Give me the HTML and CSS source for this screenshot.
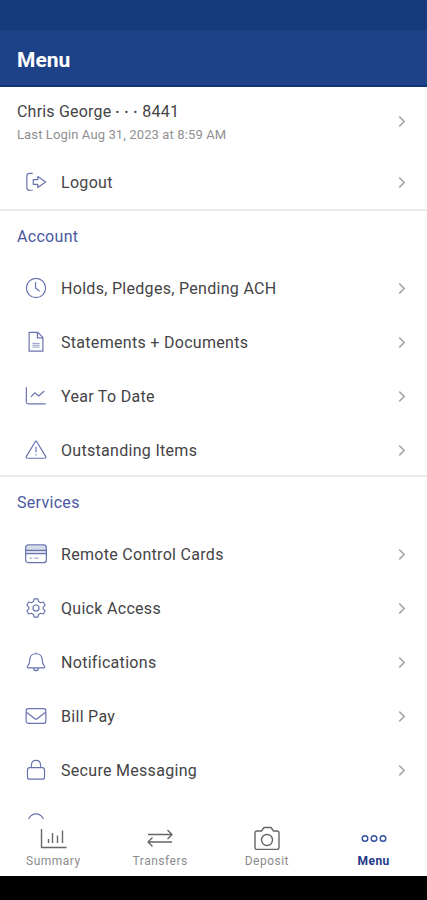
FILE: index.html
```
<!doctype html>
<html lang="en">
<head>
<meta charset="utf-8">
<meta name="viewport" content="width=device-width, initial-scale=1">
<title>Menu</title>
<link rel="stylesheet" href="styles.css">
</head>

<body>
<svg class="defs" width="0" height="0">
    <symbol id="chevron" viewBox="0 0 8 12"><path d="M1.500 1.500L6 6l-4.500 4.500"/></symbol>
</svg>
<div class="phone">
    <div class="status"></div>
    <header class="header"><h1 class="title">Menu</h1></header>
    <main class="content">
        <a class="profile">
            <div class="profile-text">
                <div class="name">Chris George <span class="dots">•••</span>8441</div>
                <div class="login">Last Login Aug 31, 2023 at 8:59 AM</div>
            </div>
            <svg class="chevron"><use href="#chevron"/></svg>
        </a>
        <a class="row logout">
            <svg class="icon" viewBox="0 0 24 24"><path d="M8.500 2.500H5q-3 0-3 3v12.500q0 3 3 3h3.500M9 9.500h5V6l8.500 6-8.500 6v-3.500H9z"/></svg>
            <span class="label">Logout</span>
            <svg class="chevron"><use href="#chevron"/></svg>
        </a>

        <section class="section">
            <h2 class="section-title">Account</h2>
            <a class="row">
                <svg class="icon" viewBox="0 0 24 24"><circle cx="12" cy="12" r="10.500"/><path d="M11.500 5.500V12l4.500 3.500"/></svg>
                <span class="label">Holds, Pledges, Pending ACH</span>
                <svg class="chevron"><use href="#chevron"/></svg>
            </a>
            <a class="row">
                <svg class="icon" viewBox="0 0 24 24"><path d="M4.500 1.500H14l5.500 5.500v15h-15zM13.500 1.500v6h6"/><path class="fine" d="M8 13.500h8M8 15.500h8M8 17.500h8"/></svg>
                <span class="label">Statements + Documents</span>
                <svg class="chevron"><use href="#chevron"/></svg>
            </a>
            <a class="row">
                <svg class="icon" viewBox="0 0 24 24"><path d="M1.500 2.500v16q0 2 2 2h19M6.500 13l4-4.500 4.500 3.500 6-5.500"/></svg>
                <span class="label">Year To Date</span>
                <svg class="chevron"><use href="#chevron"/></svg>
            </a>
            <a class="row">
                <svg class="icon" viewBox="0 0 24 24"><path d="M11 3.200q1-1.700 2 0l9.500 15.800q.8 1.800-1 2h-19q-1.800-.2-1-2zM12 8.500v6M12 16.500v1.500"/></svg>
                <span class="label">Outstanding Items</span>
                <svg class="chevron"><use href="#chevron"/></svg>
            </a>
        </section>

        <section class="section">
            <h2 class="section-title">Services</h2>
            <a class="row">
                <svg class="icon" viewBox="0 0 24 24"><rect class="shade" x="1" y="3" width="22" height="8.500"/><rect x=".7" y="2" width="22.600" height="19.500" rx="3"/><path d="M1 8h22M1 11.500h22"/><path class="fine" d="M5 16.500h3M10 16.500h5"/></svg>
                <span class="label">Remote Control Cards</span>
                <svg class="chevron"><use href="#chevron"/></svg>
            </a>
            <a class="row">
                <svg class="icon" viewBox="0 0 24 24"><circle cx="12" cy="12" r="3.300"/><path d="M10 2h4l.7 3 2.300 1.300 3-.9 2 3.400L19.800 11v2l2.200 2.200-2 3.400-3-.9-2.300 1.300-.7 3h-4l-.7-3L7 17.700l-3 .9-2-3.400L4.200 13v-2L2 8.800l2-3.400 3 .9L9.300 5z"/></svg>
                <span class="label">Quick Access</span>
                <svg class="chevron"><use href="#chevron"/></svg>
            </a>
            <a class="row">
                <svg class="icon" viewBox="0 0 24 24"><path d="M12 1.500v1.500M3.500 18.500q-2-.5-.3-2.500 2-2 2-6.500Q5.500 3 12 3t6.800 6.500q0 4.500 2 6.500 1.700 2-.3 2.500zM9.500 18.500q0 3 2.500 3t2.500-3"/></svg>
                <span class="label">Notifications</span>
                <svg class="chevron"><use href="#chevron"/></svg>
            </a>
            <a class="row">
                <svg class="icon" viewBox="0 0 24 24"><rect x="1.200" y="4" width="21.600" height="16" rx="2.500"/><path d="M1.700 8l9 7q1.300 1 2.600 0l9-7"/></svg>
                <span class="label">Bill Pay</span>
                <svg class="chevron"><use href="#chevron"/></svg>
            </a>
            <a class="row">
                <svg class="icon" viewBox="0 0 24 24"><rect x="2.700" y="9.500" width="18.600" height="12.500" rx="2.500"/><path d="M7 9.500V7q0-5.500 5-5.500T17 7v2.500"/></svg>
                <span class="label">Secure Messaging</span>
                <svg class="chevron"><use href="#chevron"/></svg>
            </a>
            <a class="row">
                <svg class="icon" viewBox="0 0 24 24"><circle cx="12" cy="9.500" r="8.500"/></svg>
            </a>
        </section>
    </main>

    <nav class="tabs">
        <a class="tab">
            <svg class="tab-icon" viewBox="0 0 28 24"><path d="M2.500 3v18.500h25M9.500 13v4M13.500 7v10M18.500 9.500V17M23.500 4.500V17"/></svg>
            <span>Summary</span>
        </a>
        <a class="tab">
            <svg class="tab-icon" viewBox="0 0 28 24"><path d="M2 8.500h24M21.500 4L26 8.500 21.500 13M26 16H2M6.500 11.500L2 16l4.500 4.500"/></svg>
            <span>Transfers</span>
        </a>
        <a class="tab">
            <svg class="tab-icon" viewBox="0 0 28 24"><path d="M4 5h4.500L11 1.500h7L20.500 5H24q2 0 2 2v14.500q0 2-2 2H4q-2 0-2-2V7q0-2 2-2z"/><circle cx="14" cy="14" r="5.500"/></svg>
            <span>Deposit</span>
        </a>
        <a class="tab active">
            <svg class="tab-icon" viewBox="0 0 28 24"><circle cx="5" cy="12.500" r="2.800"/><circle cx="14" cy="12.500" r="2.800"/><circle cx="23" cy="12.500" r="2.800"/></svg>
            <span>Menu</span>
        </a>
    </nav>
    <div class="system-bar"></div>
</div>
</body>
</html>
```

FILE: styles.css
```
* { box-sizing: border-box; }
body { margin: 0; font-family: Roboto, "Liberation Sans", sans-serif; color: #444446; background: #fff; }
.defs { display: block; height: 0; }
.phone { display: flex; flex-direction: column; height: 900px; overflow: hidden; }

.status { flex: none; height: 30px; background: #153a7e; }
.header { flex: none; display: flex; align-items: center; height: 57px; padding: 4px 17px 0; background: #1e4288; border-bottom: 2px solid #12347a; }
.title { margin: 0; font-size: 21px; font-weight: 700; line-height: 28px; color: #fff; }

.content { flex: 1; min-height: 0; overflow: hidden; }
.profile { display: flex; align-items: center; justify-content: space-between; height: 68px; padding: 0 20px 0 17px; }
.profile-text { padding-top: 2px; }
.name { font-size: 16px; line-height: 24px; letter-spacing: .2px; }
.dots { font-size: 11px; letter-spacing: 5.2px; vertical-align: 1px; }
.login { font-size: 13px; line-height: 20px; letter-spacing: .12px; color: #8f8f91; }

.row { display: flex; align-items: center; height: 54px; padding: 0 20px 0 25px; }
.label { flex: 1; margin-left: 14px; padding-top: 1px; font-size: 16px; line-height: 24px; letter-spacing: .3px; }
.icon { flex: none; width: 22px; height: 22px; fill: none; stroke: #6973ae; stroke-width: 1.3; stroke-linejoin: round; }
.icon .fine { stroke-width: 1; stroke: #8b93bd; }
.icon .shade { fill: #d8dbe8; stroke: none; }
.chevron { flex: none; width: 10px; height: 13px; fill: none; stroke: #a3a3a5; stroke-width: 1.4; }

.section { border-top: 2px solid #ebebec; }
.section + .section { margin-top: -2px; }
.section-title { margin: 0; padding: 1px 17px 0; font-size: 16px; font-weight: 400; line-height: 49px; letter-spacing: .3px; color: #4a58a2; }
.section + .section .section-title { padding-top: 2px; line-height: 48px; }

.tabs { flex: none; display: flex; height: 57px; background: #fff; }
.tab { flex: 1; display: flex; flex-direction: column; align-items: center; padding-top: 7px; font-size: 12px; line-height: 16px; letter-spacing: .5px; color: #8c8c8e; }
.tab-icon { width: 28px; height: 24px; margin-bottom: 3px; fill: none; stroke: #666; stroke-width: 1.4; stroke-linejoin: round; }
.active { font-weight: 700; color: #1f3a8a; }
.active .tab-icon { stroke: #3350a0; }
.system-bar { flex: none; height: 24px; background: #000; }
```
